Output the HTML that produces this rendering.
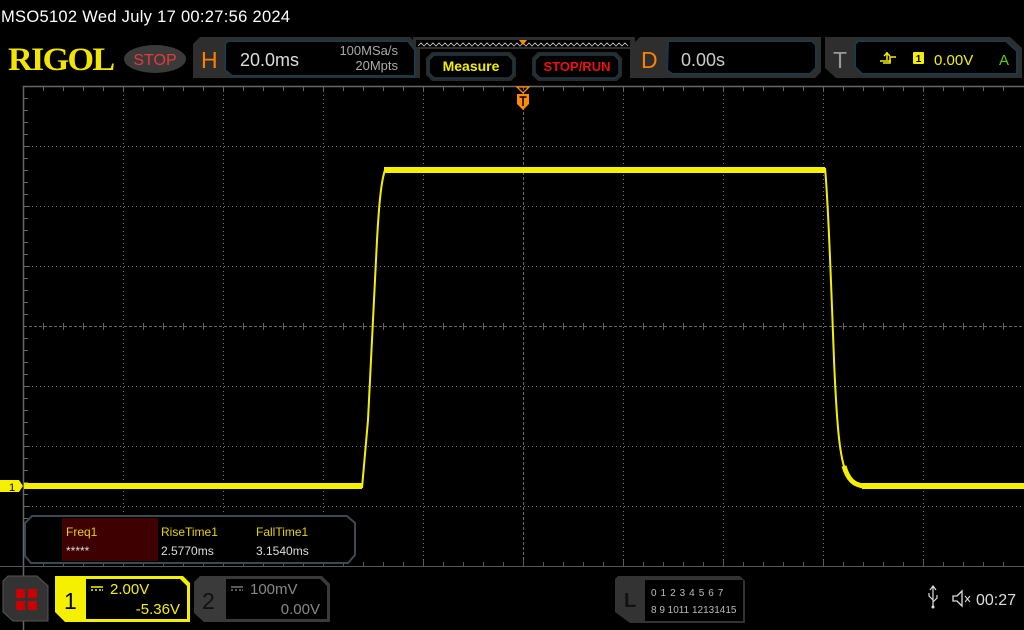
<!DOCTYPE html>
<html><head><meta charset="utf-8"><style>
html,body{margin:0;padding:0;background:#000;width:1024px;height:630px;overflow:hidden}
svg{display:block}
text{font-family:"Liberation Sans",sans-serif}
</style></head><body>
<svg width="1024" height="630" viewBox="0 0 1024 630" xmlns="http://www.w3.org/2000/svg">
<rect width="1024" height="630" fill="#000"/>
<!-- title -->
<text x="1" y="22" font-size="16.5" fill="#fff" letter-spacing="0.3">MSO5102  Wed July 17 00:27:56 2024</text>
<!-- RIGOL -->
<text x="0" y="0" font-size="31" font-weight="bold" fill="#f2e600" style="font-family:'Liberation Serif',serif" letter-spacing="-1.5" transform="translate(8,70) scale(1.1,1.05)">RIGOL</text>
<ellipse cx="155" cy="59" rx="31" ry="14" fill="#3a3a3a"/>
<text x="155" y="65" font-size="16" fill="#e63a3a" text-anchor="middle">STOP</text>
<!-- H panel -->
<path d="M200 37 H410 L420 47 V78 H193 V44 Z" fill="#2e2e2e"/>
<path d="M228 41 H408 L415 50 V76 H232 L225 70 V44 Z" fill="#000" stroke="#1b3a48" stroke-width="2"/>
<text x="201" y="68" font-size="23" fill="#ff7f00">H</text>
<text x="240" y="66" font-size="18" fill="#ddd">20.0ms</text>
<text x="398" y="55" font-size="13" fill="#aaa" text-anchor="end">100MSa/s</text>
<text x="398" y="70" font-size="13" fill="#aaa" text-anchor="end">20Mpts</text>
<!-- trigger bar -->
<path d="M413 37 H635 V44 L630 49 H418 L413 44 Z" fill="#2e2e2e"/>
<rect x="416" y="40" width="214" height="7" fill="#000"/>
<polyline points="418,46 421,43 424,46 427,43 430,46 433,43 436,46 439,43 442,46 445,43 448,46 451,43 454,46 457,43 460,46 463,43 466,46 469,43 472,46 475,43 478,46 481,43 484,46 487,43 490,46 493,43 496,46 499,43 502,46 505,43 508,46 511,43 514,46 517,43 520,46 523,43 526,46 529,43 532,46 535,43 538,46 541,43 544,46 547,43 550,46 553,43 556,46 559,43 562,46 565,43 568,46 571,43 574,46 577,43 580,46 583,43 586,46 589,43 592,46 595,43 598,46 601,43 604,46 607,43 610,46 613,43 616,46 619,43 622,46 625,43 628,46" fill="none" stroke="#ccc" stroke-width="0.8"/>
<path d="M519 40 H527 L523 45 Z" fill="#ff8c00"/>
<!-- Measure -->
<path d="M432 52 H510 L516 58 V76 L511 81 H432 L426 75 V58 Z" fill="#2a2a2a"/>
<path d="M434 55 H508 L513 60 V74 L509 78 H434 L429 73 V60 Z" fill="#000" stroke="#1b3a48" stroke-width="1.5"/>
<text x="471" y="71" font-size="14" font-weight="bold" fill="#f2f000" text-anchor="middle">Measure</text>
<!-- STOP/RUN -->
<path d="M538 52 H616 L622 58 V76 L617 81 H538 L532 75 V58 Z" fill="#2a2a2a"/>
<path d="M540 55 H614 L619 60 V74 L615 78 H540 L535 73 V60 Z" fill="#000" stroke="#1b3a48" stroke-width="1.5"/>
<text x="577" y="71" font-size="13" font-weight="bold" fill="#ee1010" text-anchor="middle">STOP/RUN</text>
<!-- D panel -->
<path d="M640 37 H821 V72 L815 78 H630 V47 Z" fill="#2e2e2e"/>
<path d="M668 41 H812 L816 45 V68 L810 74 H672 L667 70 Z" fill="#000" stroke="#1b3a48" stroke-width="2"/>
<text x="641" y="68" font-size="23" fill="#ff7f00">D</text>
<text x="681" y="66" font-size="18" fill="#ccc">0.00s</text>
<!-- T panel -->
<path d="M825 37 H1010 L1022 48 V78 H836 L825 68 Z" fill="#2e2e2e"/>
<path d="M858 41 H1006 L1017 51 V74 H862 L855 67 V44 Z" fill="#000" stroke="#1b3a48" stroke-width="2"/>
<text x="833" y="68" font-size="23" fill="#999">T</text>
<path d="M883 63 H890 V57 H896 M887 52 L887 60 M884 56 L887 53 L890 56 M880 61 H891" fill="none" stroke="#f2f000" stroke-width="1.5"/>
<rect x="913" y="52" width="11" height="12" rx="1" fill="#f2f000"/>
<text x="918.5" y="62" font-size="10" fill="#000" text-anchor="middle" font-weight="bold">1</text>
<text x="934" y="65" font-size="15" fill="#f2f000">0.00V</text>
<text x="999" y="65" font-size="15" fill="#66cc00">A</text>
<!-- grid -->
<g stroke="#777" stroke-width="1" stroke-dasharray="1 3">
<line x1="123.5" y1="87" x2="123.5" y2="566"/><line x1="223.5" y1="87" x2="223.5" y2="566"/><line x1="323.5" y1="87" x2="323.5" y2="566"/><line x1="423.5" y1="87" x2="423.5" y2="566"/><line x1="623.5" y1="87" x2="623.5" y2="566"/><line x1="723.5" y1="87" x2="723.5" y2="566"/><line x1="823.5" y1="87" x2="823.5" y2="566"/><line x1="923.5" y1="87" x2="923.5" y2="566"/>
<line x1="24" y1="146.5" x2="1023" y2="146.5"/><line x1="24" y1="206.5" x2="1023" y2="206.5"/><line x1="24" y1="266.5" x2="1023" y2="266.5"/><line x1="24" y1="386.5" x2="1023" y2="386.5"/><line x1="24" y1="446.5" x2="1023" y2="446.5"/><line x1="24" y1="506.5" x2="1023" y2="506.5"/>
</g>
<g stroke="#666" stroke-width="1" stroke-dasharray="3 2">
<line x1="24" y1="326.5" x2="1023" y2="326.5"/><line x1="523.5" y1="87" x2="523.5" y2="566"/>
</g>
<path d="M23.5 630 V86.5 H1024" fill="none" stroke="#666" stroke-width="1.5"/>
<g stroke="#666" stroke-width="1">
<path d="M43.5 87 v4 M63.5 87 v4 M83.5 87 v4 M103.5 87 v4 M123.5 87 v5 M143.5 87 v4 M163.5 87 v4 M183.5 87 v4 M203.5 87 v4 M223.5 87 v5 M243.5 87 v4 M263.5 87 v4 M283.5 87 v4 M303.5 87 v4 M323.5 87 v5 M343.5 87 v4 M363.5 87 v4 M383.5 87 v4 M403.5 87 v4 M423.5 87 v5 M443.5 87 v4 M463.5 87 v4 M483.5 87 v4 M503.5 87 v4 M543.5 87 v4 M563.5 87 v4 M583.5 87 v4 M603.5 87 v4 M623.5 87 v5 M643.5 87 v4 M663.5 87 v4 M683.5 87 v4 M703.5 87 v4 M723.5 87 v5 M743.5 87 v4 M763.5 87 v4 M783.5 87 v4 M803.5 87 v4 M823.5 87 v5 M843.5 87 v4 M863.5 87 v4 M883.5 87 v4 M903.5 87 v4 M923.5 87 v5 M943.5 87 v4 M963.5 87 v4 M983.5 87 v4 M1003.5 87 v4"/>
<path d="M24 98.5 h4 M24 110.5 h4 M24 122.5 h4 M24 134.5 h4 M24 146.5 h6 M24 158.5 h4 M24 170.5 h4 M24 182.5 h4 M24 194.5 h4 M24 206.5 h6 M24 218.5 h4 M24 230.5 h4 M24 242.5 h4 M24 254.5 h4 M24 266.5 h6 M24 278.5 h4 M24 290.5 h4 M24 302.5 h4 M24 314.5 h4 M24 338.5 h4 M24 350.5 h4 M24 362.5 h4 M24 374.5 h4 M24 386.5 h6 M24 398.5 h4 M24 410.5 h4 M24 422.5 h4 M24 434.5 h4 M24 446.5 h6 M24 458.5 h4 M24 470.5 h4 M24 482.5 h4 M24 494.5 h4 M24 506.5 h6 M24 518.5 h4 M24 530.5 h4 M24 542.5 h4 M24 554.5 h4"/>
<path d="M43.5 323 v7 M63.5 323 v7 M83.5 323 v7 M103.5 323 v7 M143.5 323 v7 M163.5 323 v7 M183.5 323 v7 M203.5 323 v7 M243.5 323 v7 M263.5 323 v7 M283.5 323 v7 M303.5 323 v7 M343.5 323 v7 M363.5 323 v7 M383.5 323 v7 M403.5 323 v7 M443.5 323 v7 M463.5 323 v7 M483.5 323 v7 M503.5 323 v7 M543.5 323 v7 M563.5 323 v7 M583.5 323 v7 M603.5 323 v7 M643.5 323 v7 M663.5 323 v7 M683.5 323 v7 M703.5 323 v7 M743.5 323 v7 M763.5 323 v7 M783.5 323 v7 M803.5 323 v7 M843.5 323 v7 M863.5 323 v7 M883.5 323 v7 M903.5 323 v7 M943.5 323 v7 M963.5 323 v7 M983.5 323 v7 M1003.5 323 v7"/>
<path d="M43.5 562 v4 M63.5 562 v4 M83.5 562 v4 M103.5 562 v4 M123.5 560 v6 M143.5 562 v4 M163.5 562 v4 M183.5 562 v4 M203.5 562 v4 M223.5 560 v6 M243.5 562 v4 M263.5 562 v4 M283.5 562 v4 M303.5 562 v4 M323.5 560 v6 M343.5 562 v4 M363.5 562 v4 M383.5 562 v4 M403.5 562 v4 M423.5 560 v6 M443.5 562 v4 M463.5 562 v4 M483.5 562 v4 M503.5 562 v4 M523.5 560 v6 M543.5 562 v4 M563.5 562 v4 M583.5 562 v4 M603.5 562 v4 M623.5 560 v6 M643.5 562 v4 M663.5 562 v4 M683.5 562 v4 M703.5 562 v4 M723.5 560 v6 M743.5 562 v4 M763.5 562 v4 M783.5 562 v4 M803.5 562 v4 M823.5 560 v6 M843.5 562 v4 M863.5 562 v4 M883.5 562 v4 M903.5 562 v4 M923.5 560 v6 M943.5 562 v4 M963.5 562 v4 M983.5 562 v4 M1003.5 562 v4 M0 566.5 H1024" stroke="#555"/>
</g>
<!-- trigger marker -->
<path d="M517 87 H529 L523 93 Z" fill="none" stroke="#ff8c00" stroke-width="1.3"/>
<path d="M517 94 H529 V104 L523 110 L517 104 Z" fill="#ff8c00"/>
<path d="M519.5 97 H526.5 M523 97 V106" stroke="#000" stroke-width="1.5"/>
<!-- waveform -->
<path d="M24 486 H362 M384 170 H825 M862 486 H1024" fill="none" stroke="#f5f000" stroke-width="6"/>
<path d="M844 466 C848 480 854 485 864 486" fill="none" stroke="#f5f000" stroke-width="5"/>
<path d="M362 488 L368 420 L373 320 L377 240 C379 205 381 182 385 170 M825 168 C828 200 831 280 834 360 C837 430 840 458 846 472" fill="none" stroke="#f5f000" stroke-width="2"/>
<!-- ch1 marker -->
<path d="M0 480 H19 L23 486 L19 492 H0 Z" fill="#f5f000"/>
<text x="9" y="491" font-size="11" fill="#000">1</text>
<!-- measurement box -->
<path d="M32 516 H347 L355 523 V555 L348 563 H31 L25 556 V523 Z" fill="#000" stroke="#3a4a52" stroke-width="2"/>
<rect x="62" y="518" width="96" height="43" fill="#3e0000"/>
<text x="66" y="536" font-size="12" fill="#e6d200">Freq1</text>
<text x="66" y="555" font-size="12" fill="#ddd">*****</text>
<text x="161" y="536" font-size="12" fill="#e6d200">RiseTime1</text>
<text x="161" y="555" font-size="12" fill="#ddd">2.5770ms</text>
<text x="256" y="536" font-size="12" fill="#e6d200">FallTime1</text>
<text x="256" y="555" font-size="12" fill="#ddd">3.1540ms</text>
<!-- bottom: menu -->
<path d="M8 576 H37 L48 586 V621 H13 L3 612 V581 Z" fill="#333" stroke="#555"/>
<rect x="16" y="589" width="9" height="9" fill="#c00"/><rect x="28" y="589" width="9" height="9" fill="#c00"/>
<rect x="16" y="601" width="9" height="9" fill="#c00"/><rect x="28" y="601" width="9" height="9" fill="#c00"/>
<!-- ch1 -->
<path d="M55 576 H183 L190 583 V622 H65 L55 612 Z" fill="#f5f000"/>
<path d="M86 579 H180 L187 586 V619 H86 Z" fill="#000"/>
<text x="64" y="609" font-size="23" fill="#000">1</text>
<path d="M91 587 H103 M91 590 h2 M95 590 h2 M99 590 h2 M102 590 h1" stroke="#f5f000" stroke-width="1.5"/>
<text x="110" y="594" font-size="15" fill="#f5f000">2.00V</text>
<text x="180" y="614" font-size="15" fill="#f5f000" text-anchor="end">-5.36V</text>
<!-- ch2 -->
<path d="M200 576 H322 L330 584 V622 H204 L194 613 V582 Z" fill="#3a3a3a"/>
<path d="M226 579 H320 L327 586 V619 H226 Z" fill="#000"/>
<text x="202" y="609" font-size="23" fill="#111">2</text>
<path d="M231 587 H243 M231 590 h2 M235 590 h2 M239 590 h2 M242 590 h1" stroke="#777" stroke-width="1.5"/>
<text x="250" y="594" font-size="15" fill="#888">100mV</text>
<text x="320" y="614" font-size="15" fill="#888" text-anchor="end">0.00V</text>
<!-- L panel -->
<path d="M618 576 H740 L745 581 V623 H630 L615 612 V579 Z" fill="#333"/>
<rect x="645" y="580" width="98" height="41" fill="#000"/>
<text x="624" y="607" font-size="20" fill="#111" font-weight="bold">L</text>
<text x="651" y="596" font-size="10" fill="#bbb" letter-spacing="0.6">0 1 2 3  4 5 6 7</text>
<text x="651" y="613" font-size="10" fill="#bbb" letter-spacing="0">8 9 1011 12131415</text>
<!-- usb/sound/time -->
<path d="M933 587 V607 M930 590 L933 586 L936 590 M933 600 L929 596 V593 M933 602 L937 598 V595" fill="none" stroke="#ddd" stroke-width="1.2"/>
<circle cx="933" cy="607" r="1.5" fill="#ddd"/>
<path d="M953 596 H957 L962 591 V606 L957 601 H953 Z" fill="none" stroke="#ddd" stroke-width="1.3"/>
<path d="M965 596 L970 602 M970 596 L965 602" stroke="#ddd" stroke-width="1"/>
<text x="976" y="605" font-size="16" fill="#ddd">00:27</text>
</svg>
</body></html>
